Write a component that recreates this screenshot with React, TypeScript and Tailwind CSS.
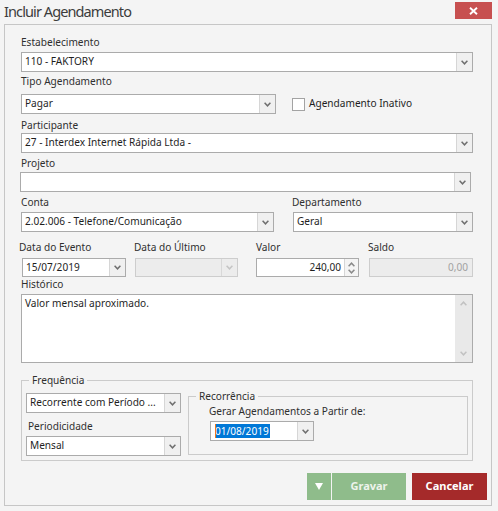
import clsx from "clsx";

function Chevron({ up, color = "#6f6f6f" }: { up?: boolean; color?: string }) {
  return (
    <svg width="7" height="5" viewBox="0 0 7 5">
      <path
        d={up ? "M0.6 4.2 L3.5 1.2 L6.4 4.2" : "M0.6 0.8 L3.5 3.8 L6.4 0.8"}
        fill="none"
        stroke={color}
        strokeWidth="1.5"
      />
    </svg>
  );
}

function Label({ children, className }: { children: React.ReactNode; className?: string }) {
  return <div className={clsx("h-[15px] leading-[15px] text-[#2f2f2f] whitespace-nowrap", className)}>{children}</div>;
}

function Combo({
  children,
  className,
  disabled,
}: {
  children?: React.ReactNode;
  className?: string;
  disabled?: boolean;
}) {
  return (
    <div
      className={clsx(
        "flex border",
        disabled ? "border-[#cdcdcd] bg-[#ececec]" : "border-[#ababab] bg-white",
        className
      )}
    >
      <div className="flex min-w-0 flex-1 items-center overflow-hidden whitespace-nowrap pl-[3px] text-[#1e1e1e]">
        {children}
      </div>
      <div
        className={clsx(
          "flex w-[16px] items-center justify-center border-l",
          disabled ? "border-[#d8d8d8] bg-[#ececec]" : "border-[#d6d6d6] bg-[#f0f0f0]"
        )}
      >
        <Chevron color={disabled ? "#c4c4c4" : "#6f6f6f"} />
      </div>
    </div>
  );
}

export default function App() {
  return (
    <div className="flex h-[511px] w-[498px] flex-col bg-[#f4f4f4] font-['Noto_Sans',sans-serif] text-[10.1px]">
      {/* title bar */}
      <div className="flex h-[24px] items-start justify-between">
        <div className="pl-[4px] pt-[1px] text-[14.5px] leading-[20px] tracking-[-0.9px] text-[#3c3c3c]">
          Incluir Agendamento
        </div>
        <button className="mr-[6px] mt-[2px] flex h-[17px] w-[37px] items-center justify-center bg-[#c75050]">
          <svg width="9" height="8" viewBox="0 0 9 8">
            <path d="M1 0.8 L8 7.2 M8 0.8 L1 7.2" stroke="#fff" strokeWidth="1.9" />
          </svg>
        </button>
      </div>

      {/* panel */}
      <div className="mb-[5px] ml-[4px] mr-[6px] flex flex-1 flex-col border border-[#c6c6c6] bg-[#f4f4f4] pl-[16px] pr-[18px]">
        <Label className="mt-[10px]">Estabelecimento</Label>
        <Combo className="mt-[2px] h-[20px]">110 - FAKTORY</Combo>

        <Label className="mt-[2px]">Tipo Agendamento</Label>
        <div className="mt-[5px] flex items-center">
          <Combo className="h-[20px] w-[255px]">Pagar</Combo>
          <div className="ml-[16px] h-[13px] w-[13px] border border-[#a3a3a3] bg-white" />
          <span className="ml-[4px] text-[#1e1e1e]">Agendamento Inativo</span>
        </div>

        <Label className="mt-[4px]">Participante</Label>
        <Combo className="h-[20px]">27 - Interdex Internet Rápida Ltda -</Combo>

        <Label className="mt-[3px]">Projeto</Label>
        <Combo className="-ml-[1px] mr-[2px] mt-[1px] h-[20px]" />

        <div className="mt-[3px] flex">
          <div className="w-[253px]">
            <Label>Conta</Label>
            <Combo className="mt-[2px] h-[20px]">2.02.006 - Telefone/Comunicação</Combo>
          </div>
          <div className="ml-[19px] flex-1">
            <Label className="-ml-[1px]">Departamento</Label>
            <Combo className="mt-[2px] h-[20px]">Geral</Combo>
          </div>
        </div>

        <div className="mt-[8px] flex">
          <div className="w-[113px]">
            <Label className="-ml-[2px]">Data do Evento</Label>
            <Combo className="ml-[1px] mt-[3px] h-[19px] w-[104px]">15/07/2019</Combo>
          </div>
          <div className="w-[122px]">
            <Label>Data do Último</Label>
            <Combo disabled className="ml-[1px] mt-[3px] h-[19px] w-[103px]" />
          </div>
          <div className="w-[112px]">
            <Label>Valor</Label>
            <div className="mt-[3px] flex h-[19px] w-[103px] border border-[#ababab] bg-white">
              <div className="flex flex-1 items-center justify-end pr-[3px] text-[#1e1e1e]">240,00</div>
              <div className="flex w-[14px] flex-col items-center justify-center gap-[2px] border-l border-[#d6d6d6] bg-[#f4f4f4]">
                <Chevron up color="#8a8a8a" />
                <Chevron color="#8a8a8a" />
              </div>
            </div>
          </div>
          <div className="flex-1">
            <Label>Saldo</Label>
            <div className="ml-[1px] mt-[3px] flex h-[19px] items-center justify-end border border-[#cdcdcd] bg-[#ececec] pr-[4px] text-[#a2a2a2]">
              0,00
            </div>
          </div>
        </div>

        <Label>Histórico</Label>
        <div className="mt-[2px] flex h-[69px] border border-[#ababab] bg-white">
          <div className="flex-1 pl-[3px] pt-[1px] leading-[15px] text-[#1e1e1e]">Valor mensal aproximado.</div>
          <div className="flex w-[17px] flex-col items-center justify-between bg-[#e9e9e9] py-[6px]">
            <Chevron up color="#c2c2c2" />
            <Chevron color="#c2c2c2" />
          </div>
        </div>

        {/* Frequência */}
        <fieldset className="mt-[10px] border border-[#cbcbcb] pb-[4px] pl-[4px] pr-[4px]">
          <legend className="ml-[3px] px-[3px] leading-[15px] text-[#2f2f2f]">Frequência</legend>
          <div className="flex items-start gap-[7px]">
            <div className="w-[155px]">
              <Combo className="mt-[5px] h-[20px]">Recorrente com Período ...</Combo>
              <Label className="mt-[6px] pl-[2px]">Periodicidade</Label>
              <Combo className="mt-[2px] h-[20px]">Mensal</Combo>
            </div>
            <fieldset className="mt-[1px] flex-1 border border-[#cbcbcb] pb-[13px] pl-[4px]">
              <legend className="ml-[3px] px-[3px] leading-[15px] text-[#2f2f2f]">Recorrência</legend>
              <Label className="ml-[16px]">Gerar Agendamentos a Partir de:</Label>
              <Combo className="ml-[17px] mt-[2px] h-[20px] w-[104px]">
                <span className="relative ml-[1px] bg-[#0078d7] pr-[1px] leading-[14px] text-white">
                  <span className="absolute left-0 top-0 h-full w-[1px] bg-[#f07820]" />
                  01/08/2019
                </span>
              </Combo>
            </fieldset>
          </div>
        </fieldset>

        {/* buttons */}
        <div className="-mr-[14px] mt-[12px] flex justify-end gap-[6px]">
          <div className="flex h-[27px] w-[99px] bg-[#8fbc8b]">
            <div className="flex w-[24px] items-center justify-center">
              <svg width="8" height="7" viewBox="0 0 8 7">
                <path d="M0 0 H8 L4 7 Z" fill="#fff" />
              </svg>
            </div>
            <div className="w-[1px] bg-[#f4f4f4]" />
            <div className="flex flex-1 items-center justify-center text-[11px] font-bold text-[#eef3ec]">Gravar</div>
          </div>
          <div className="flex h-[27px] w-[75px] items-center justify-center bg-[#a52a2a] text-[11px] font-bold text-white">
            Cancelar
          </div>
        </div>
      </div>
    </div>
  );
}
